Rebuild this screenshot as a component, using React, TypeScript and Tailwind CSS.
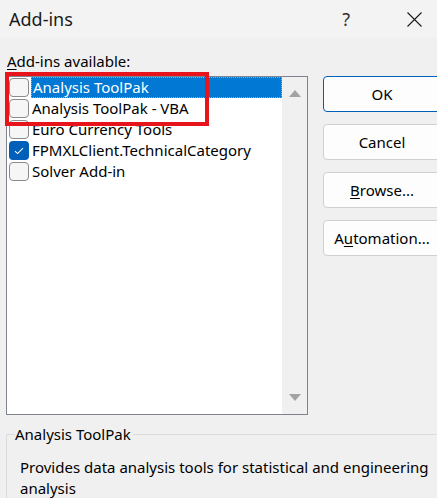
import { useState } from "react";

type AddIn = { name: string; enabled: boolean };

const addIns: AddIn[] = [
  { name: "Analysis ToolPak", enabled: false },
  { name: "Analysis ToolPak - VBA", enabled: false },
  { name: "Euro Currency Tools", enabled: false },
  { name: "FPMXLClient.TechnicalCategory", enabled: true },
  { name: "Solver Add-in", enabled: false },
];

function CheckBox({ checked }: { checked: boolean }) {
  if (checked) {
    return (
      <span className="flex h-[19px] w-[20px] shrink-0 items-center justify-center rounded-[4px] bg-[#005fb8]">
        <svg width="10" height="8" viewBox="0 0 10 8" fill="none">
          <path d="M1 4.2 L3.6 6.6 L9 1.2" stroke="white" strokeWidth="1.1" />
        </svg>
      </span>
    );
  }
  return (
    <span className="h-[19px] w-[20px] shrink-0 rounded-[4px] border border-[#8b8b8b] bg-[#f6f6f6]" />
  );
}

function Btn({ children, primary }: { children: React.ReactNode; primary?: boolean }) {
  return (
    <button
      className={`h-[36px] w-[118px] shrink-0 rounded-[4px] border bg-[#fdfdfd] text-[15px] text-black ${
        primary ? "border-[#005fb8]" : "border-[#d0d0d0]"
      }`}
    >
      {children}
    </button>
  );
}

export default function App() {
  const [selected, setSelected] = useState(0);
  const current = addIns[selected];

  return (
    <div className="relative h-[498px] w-[437px] overflow-hidden bg-[#f0f0f0] font-['Segoe_UI','Noto_Sans',sans-serif] text-black">
      {/* title bar */}
      <div className="flex h-[38px] items-center bg-[#f3f3f3]">
        <span className="pl-[9px] text-[18px] text-[#1a1a1a]">Add-ins</span>
        <span className="ml-auto mr-[57px] text-[18px] text-[#333]">?</span>
        <svg className="mr-[15px]" width="15" height="15" viewBox="0 0 15 15">
          <path d="M0.5 0.5 L14.5 14.5 M14.5 0.5 L0.5 14.5" stroke="#1a1a1a" strokeWidth="1.1" />
        </svg>
      </div>

      <div className="px-[6px]">
        <div className="mt-[13px] pl-[1px] text-[15px] leading-[20px]">
          <span className="underline underline-offset-2">A</span>dd-ins available:
        </div>

        <div className="mt-[5px] flex w-[460px]">
          {/* list box */}
          <div className="flex h-[339px] w-[302px] shrink-0 border border-[#7f848c] bg-white">
            <ul className="flex-1">
              {addIns.map((a, i) => (
                <li
                  key={a.name}
                  onClick={() => setSelected(i)}
                  className="flex h-[21px] items-center pl-[2px]"
                >
                  <CheckBox checked={a.enabled} />
                  <span
                    className={`ml-[2px] flex h-[21px] items-center pl-[1px] pr-[3px] text-[15px] ${
                      i === selected
                        ? "flex-1 border border-dotted border-[#e8a24a] bg-[#0078d4] text-white"
                        : ""
                    }`}
                  >
                    {a.name}
                  </span>
                </li>
              ))}
            </ul>
            {/* scrollbar */}
            <div className="flex w-[25px] flex-col items-center justify-between bg-[#f0f0f0] py-[13px]">
              <svg width="12" height="7" viewBox="0 0 12 7">
                <path d="M6 0 L12 7 L0 7 Z" fill="#a3a3a3" />
              </svg>
              <svg width="12" height="7" viewBox="0 0 12 7">
                <path d="M0 0 L12 0 L6 7 Z" fill="#a3a3a3" />
              </svg>
            </div>
          </div>

          {/* buttons */}
          <div className="ml-[15px] flex shrink-0 flex-col gap-[12px]">
            <Btn primary>OK</Btn>
            <Btn>Cancel</Btn>
            <Btn>
              <span className="underline underline-offset-2">B</span>rowse...
            </Btn>
            <Btn>
              A<span className="underline underline-offset-2">u</span>tomation...
            </Btn>
          </div>
        </div>

        {/* description group */}
        <fieldset className="mt-[9px] h-[120px] w-[450px] border border-[#dcdcdc] pl-[8px]">
          <legend className="px-0 pr-[2px] text-[15px] leading-[20px]">{current.name}</legend>
          <p className="mt-[13px] pl-[5px] text-[15px] leading-[21px]">
            Provides data analysis tools for statistical and engineering
            <br />
            analysis
          </p>
        </fieldset>
      </div>

      {/* red callout */}
      <div className="pointer-events-none absolute left-[5px] top-[72px] h-[54px] w-[204px] border-[4px] border-[#e8141c]" />
    </div>
  );
}
